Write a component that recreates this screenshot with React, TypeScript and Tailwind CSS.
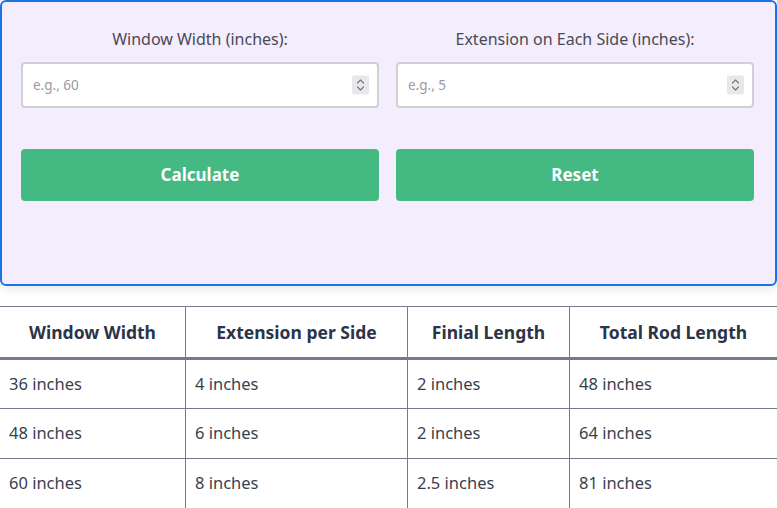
import React from "react";

const font = { fontFamily: '"Noto Sans", "Open Sans", sans-serif' };

function Spinner() {
  return (
    <div className="absolute right-[10px] top-1/2 -translate-y-1/2 w-[17px] h-[19px] bg-[#e8e8ea] rounded-[2px] flex flex-col items-center justify-center">
      <svg width="9" height="15" viewBox="0 0 9 15" fill="none" stroke="#7a7a84" strokeWidth="1.2" strokeLinecap="round" strokeLinejoin="round">
        <path d="M1.5 5.5 L4.5 2.5 L7.5 5.5" />
        <path d="M1.5 9.5 L4.5 12.5 L7.5 9.5" />
      </svg>
    </div>
  );
}

function Field({ label, placeholder }: { label: string; placeholder: string }) {
  return (
    <div className="flex flex-col">
      <label className="text-center text-[16px] leading-[24px] text-[#4a4a55] mb-[11px]">{label}</label>
      <div className="relative">
        <input
          type="text"
          placeholder={placeholder}
          className="w-full h-[46px] border-2 border-[#cfcfd6] rounded-[4px] bg-white pl-[10px] text-[13.5px] text-[#333] placeholder:text-[#9a9aa3] outline-none"
          style={font}
        />
        <Spinner />
      </div>
    </div>
  );
}

const rows = [
  ["36 inches", "4 inches", "2 inches", "48 inches"],
  ["48 inches", "6 inches", "2 inches", "64 inches"],
  ["60 inches", "8 inches", "2.5 inches", "81 inches"],
];

export default function App() {
  return (
    <div className="bg-white w-[777px] h-[508px] overflow-hidden" style={font}>
      <div className="bg-[#f4edfd] border-2 border-[#1a73e8] rounded-[6px] pl-[19px] pr-[21px] pt-[25px] h-[286px] shadow-[0_4px_10px_rgba(0,0,0,0.08)]">
        <div className="grid grid-cols-2 gap-x-[17px]">
          <Field label="Window Width (inches):" placeholder="e.g., 60" />
          <Field label="Extension on Each Side (inches):" placeholder="e.g., 5" />
        </div>
        <div className="grid grid-cols-2 gap-x-[17px] mt-[41px]">
          <button className="h-[52px] rounded-[4px] bg-[#45b982] text-white font-bold text-[17px]">Calculate</button>
          <button className="h-[52px] rounded-[4px] bg-[#45b982] text-white font-bold text-[17px]">Reset</button>
        </div>
      </div>
      <table className="mt-[20px] -ml-px w-[778px] border-collapse table-fixed text-[16.5px]">
        <colgroup>
          <col className="w-[186px]" />
          <col className="w-[222px]" />
          <col className="w-[162px]" />
          <col className="w-[208px]" />
        </colgroup>
        <thead>
          <tr className="h-[52px] border-b-[3px] border-[#737b8c]">
            {["Window Width", "Extension per Side", "Finial Length", "Total Rod Length"].map((h) => (
              <th key={h} className="border border-[#737b8c] border-b-[3px] text-center font-bold text-[17.5px] text-[#2b3448]">
                {h}
              </th>
            ))}
          </tr>
        </thead>
        <tbody>
          {rows.map((r, i) => (
            <tr key={i} className="h-[50px]">
              {r.map((c, j) => (
                <td key={j} className="border border-[#737b8c] px-[9px] text-left text-[#3a3f4e]">
                  {c}
                </td>
              ))}
            </tr>
          ))}
        </tbody>
      </table>
    </div>
  );
}
